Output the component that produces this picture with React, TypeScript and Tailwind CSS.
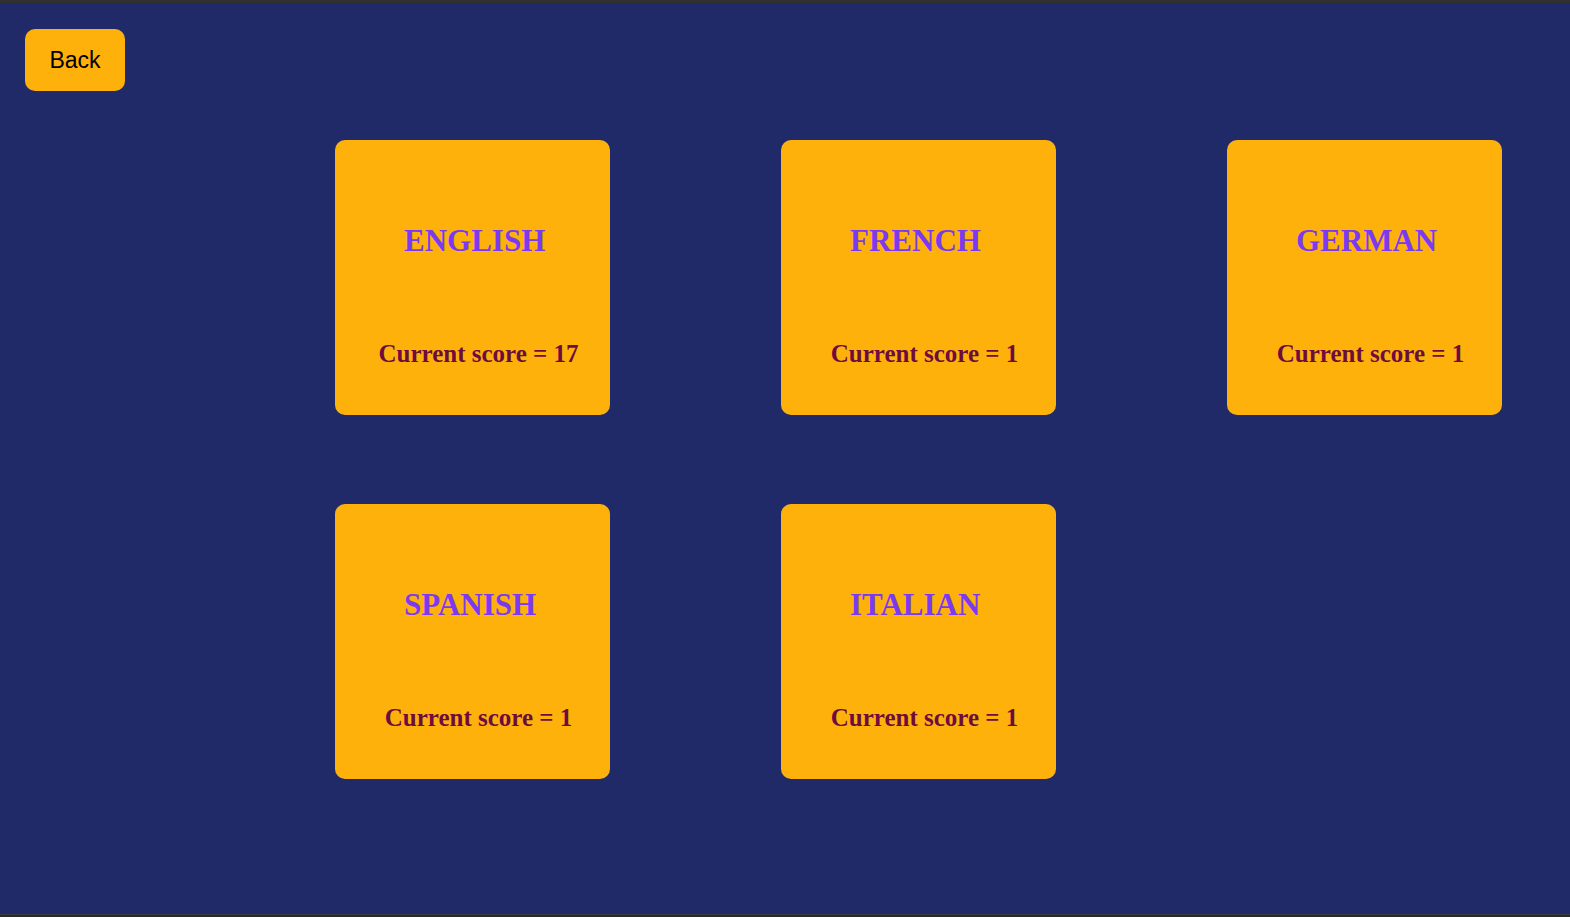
import React from 'react';

const languages = [
  { name: 'ENGLISH', score: 17 },
  { name: 'FRENCH', score: 1 },
  { name: 'GERMAN', score: 1 },
  { name: 'SPANISH', score: 1 },
  { name: 'ITALIAN', score: 1 },
];

const LanguageCard = ({ name, score }: { name: string; score: number }) => {
  return (
    <div className="w-[275px] h-[275px] bg-[#ffb10b] rounded-[10px] flex flex-col font-['Liberation_Serif',serif] font-bold">
      <h1 className="pt-[83px] pl-[69px] text-[31px] leading-[36px] text-[#7b3af2]">{name}</h1>
      <h3 className="mt-[80px] pl-[12px] text-center text-[25px] leading-[29px] text-[#6d0c3e]">
        Current score = {score}
      </h3>
    </div>
  );
};

export default function App() {
  return (
    <div className="w-full h-[917px] flex flex-col bg-[#202a68] overflow-hidden">
      <div className="h-[3px] bg-[#303030]" />
      <div className="flex-1 flex flex-col">
        <div className="pt-[26px] pl-[25px]">
          <button className="w-[100px] h-[62px] rounded-[10px] bg-[#ffb10b] text-black text-[23px] font-['Liberation_Sans',Arial,sans-serif] flex items-center justify-center">
            Back
          </button>
        </div>
        <div className="mt-[49px] ml-[335px] grid grid-cols-[275px_275px_275px] gap-x-[171px] gap-y-[89px]">
          {languages.map((l) => (
            <LanguageCard key={l.name} name={l.name} score={l.score} />
          ))}
        </div>
      </div>
      <div className="h-[3px] bg-[#2a2a2a] border-t border-[#3a3a3a]" />
    </div>
  );
}
